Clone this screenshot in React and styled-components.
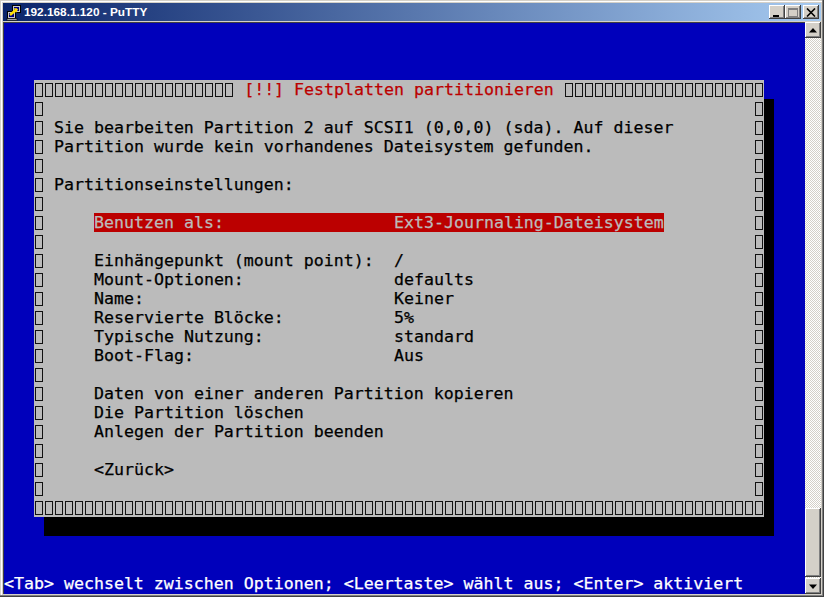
import React from 'react';
import styled, { createGlobalStyle } from 'styled-components';

const Global = createGlobalStyle`
  html, body { margin: 0; padding: 0; background: #d4d0c8; }
  body { width: 824px; height: 597px; overflow: hidden; }
`;

const Window = styled.div`
  width: 824px; height: 597px; box-sizing: border-box;
  display: flex; flex-direction: column;
  background: #d4d0c8;
  padding: 3px 3px 3px 3px;
  box-shadow: inset -1px -1px 0 #404040, inset -2px -2px 0 #808080, inset 1px 1px 0 #d4d0c8, inset 2px 2px 0 #fff;
  font-family: "DejaVu Sans Mono", monospace;
`;
const TitleBar = styled.div`
  height: 18px; flex: none; display: flex; align-items: center;
  margin-bottom: 1px;
  padding: 0 2px 0 2px;
  background: linear-gradient(90deg, #0a246a, #a6caf0);
`;
const TitleText = styled.span`
  flex: 1; color: #fff; margin-left: 2px;
  font: bold 11.8px/18px "Liberation Sans", sans-serif;
`;
const WinButton = styled.div`
  width: 16px; height: 14px; box-sizing: border-box; flex: none;
  display: flex; align-items: center; justify-content: center;
  margin-left: ${p => (p.$gap ? 2 : 0)}px;
  background: #d4d0c8;
  box-shadow: inset -1px -1px 0 #404040, inset 1px 1px 0 #fff, inset -2px -2px 0 #808080;
`;
const Body = styled.div`
  flex: 1; display: flex; min-height: 0;
`;
const Terminal = styled.div`
  width: 802px; box-sizing: border-box; flex: none;
  display: flex; flex-direction: column;
  background: #0000bb;
  padding: 58px 0 1px 31px;
  box-shadow: inset 1px 1px 0 #404040;
  font-size: 16.6px; line-height: 19px;
  -webkit-text-stroke: 0.25px currentColor;
  white-space: pre;
`;
const Dialog = styled.div`
  width: 730px; background: #bbb; color: #000;
  box-shadow: 10px 19px 0 #000;
  display: flex; flex-direction: column;
`;
const Row = styled.div`
  height: 19px; display: flex;
`;
const Glyph = styled.span`
  width: 10px; height: 19px; flex: none; box-sizing: border-box;
  display: flex; align-items: center; justify-content: center;
  &::before {
    content: ""; width: 8px; height: 14px; box-sizing: border-box;
    border: 1px solid #111;
  }
`;
const Rule = styled.div`
  display: flex; flex: none;
`;
const TitleLabel = styled.span`
  flex: 1; text-align: center; color: #bb0000;
`;
const Line = styled.div`
  flex: 1; padding-left: ${p => p.$indent * 10}px;
  display: flex;
`;
const Label = styled.span`
  width: 300px; flex: none;
`;
const Selected = styled.div`
  width: 570px; display: flex; background: #bb0000; color: #bbb;
`;
const Status = styled.div`
  margin-top: auto; margin-left: -30px; height: 19px; color: #fff;
`;
const Scrollbar = styled.div`
  width: 16px; flex: none;
  display: flex; flex-direction: column;
  background-color: #fff;
  background-image: conic-gradient(#d4d0c8 25%, #fff 0 50%, #d4d0c8 0 75%, #fff 0);
  background-size: 2px 2px;
`;
const ScrollButton = styled(WinButton)`
  width: 16px; height: 16px; margin: 0;
`;
const Thumb = styled.div`
  height: 69px; margin-top: auto; margin-bottom: 1px; background: #d4d0c8;
  box-shadow: inset -1px -1px 0 #404040, inset 1px 1px 0 #fff, inset -2px -2px 0 #808080;
`;

const Boxes = ({ n }) => (
  <Rule>{Array.from({ length: n }, (_, i) => <Glyph key={i} />)}</Rule>
);

const Text = ({ indent = 0, children }) => (
  <Row>
    <Glyph />
    <Line $indent={indent}>{children}</Line>
    <Glyph />
  </Row>
);

const Field = ({ label, value }) => (
  <Text indent={5}><Label>{label}</Label><span>{value}</span></Text>
);

const fields = [
  ['Einhängepunkt (mount point):', '/'],
  ['Mount-Optionen:', 'defaults'],
  ['Name:', 'Keiner'],
  ['Reservierte Blöcke:', '5%'],
  ['Typische Nutzung:', 'standard'],
  ['Boot-Flag:', 'Aus'],
];

const PuttyIcon = () => (
  <svg width="16" height="17" viewBox="0 0 16 17" style={{ flex: 'none', marginLeft: 1 }}>
    <rect x="6.5" y="1.5" width="8" height="7" fill="#c8c8c8" stroke="#000" />
    <rect x="8" y="3" width="5" height="4" fill="#000080" />
    <rect x="1.5" y="7.5" width="8" height="7" fill="#c8c8c8" stroke="#000" />
    <rect x="3" y="9" width="5" height="4" fill="#000080" />
    <rect x="1" y="14.5" width="10" height="2" fill="#a0a0a0" stroke="#000" strokeWidth="0.6" />
    <path d="M4 11 L11 5" stroke="#ffe000" strokeWidth="2.4" />
    <path d="M8 4 L10 9 L12 5 Z" fill="#ffe000" />
  </svg>
);

export default function App() {
  return (
    <Window>
      <Global />
      <TitleBar>
        <PuttyIcon />
        <TitleText>192.168.1.120 - PuTTY</TitleText>
        <WinButton>
          <svg width="10" height="9" viewBox="0 0 10 9"><rect x="1" y="7" width="6" height="2" fill="#000" /></svg>
        </WinButton>
        <WinButton>
          <svg width="10" height="9" viewBox="0 0 10 9"><rect x="0.5" y="0.5" width="9" height="8" fill="none" stroke="#808080" /><rect x="0" y="0" width="10" height="2" fill="#808080" /></svg>
        </WinButton>
        <WinButton $gap>
          <svg width="10" height="9" viewBox="0 0 10 9"><path d="M1 0.5 L9 8.5 M9 0.5 L1 8.5" stroke="#000" strokeWidth="1.6" fill="none" /></svg>
        </WinButton>
      </TitleBar>
      <Body>
        <Terminal>
          <Dialog>
            <Row><Boxes n={20} /><TitleLabel>{' [!!] Festplatten partitionieren '}</TitleLabel><Boxes n={20} /></Row>
            <Text />
            <Text indent={1}>Sie bearbeiten Partition 2 auf SCSI1 (0,0,0) (sda). Auf dieser</Text>
            <Text indent={1}>Partition wurde kein vorhandenes Dateisystem gefunden.</Text>
            <Text />
            <Text indent={1}>Partitionseinstellungen:</Text>
            <Text />
            <Text indent={5}><Selected><Label>Benutzen als:</Label><span>Ext3-Journaling-Dateisystem</span></Selected></Text>
            <Text />
            {fields.map(([l, v]) => <Field key={l} label={l} value={v} />)}
            <Text />
            <Text indent={5}>Daten von einer anderen Partition kopieren</Text>
            <Text indent={5}>Die Partition löschen</Text>
            <Text indent={5}>Anlegen der Partition beenden</Text>
            <Text />
            <Text indent={5}>{'<Zurück>'}</Text>
            <Text />
            <Row><Boxes n={73} /></Row>
          </Dialog>
          <Status>{'<Tab> wechselt zwischen Optionen; <Leertaste> wählt aus; <Enter> aktiviert'}</Status>
        </Terminal>
        <Scrollbar>
          <ScrollButton>
            <svg width="8" height="5" viewBox="0 0 8 5"><path d="M4 0 L8 4.5 L0 4.5 Z" fill="#000" /></svg>
          </ScrollButton>
          <Thumb />
          <ScrollButton>
            <svg width="8" height="5" viewBox="0 0 8 5"><path d="M4 5 L8 0.5 L0 0.5 Z" fill="#000" /></svg>
          </ScrollButton>
        </Scrollbar>
      </Body>
    </Window>
  );
}
